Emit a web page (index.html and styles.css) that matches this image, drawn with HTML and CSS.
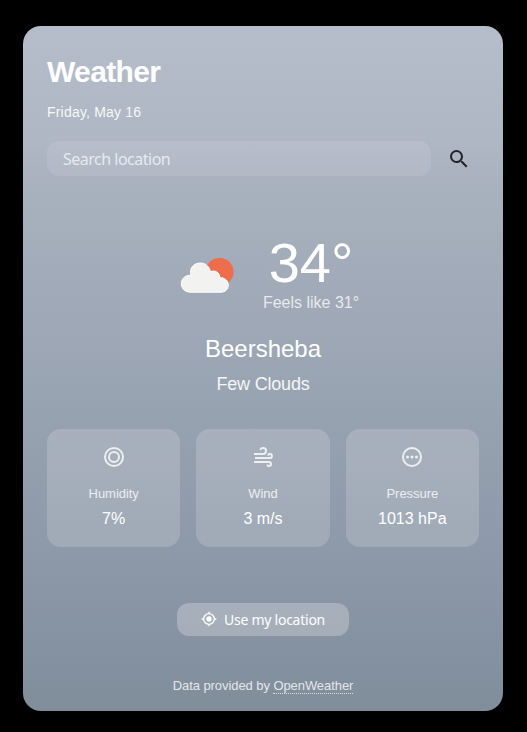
FILE: index.html
```html
<!DOCTYPE html>
<html lang="en">
<head>
<meta charset="utf-8">
<title>Weather</title>
<link rel="stylesheet" href="styles.css">
</head>
<body>
<main class="card">
  <h1 class="title">Weather</h1>
  <p class="date">Friday, May 16</p>
  <form class="search">
    <input class="search-input" type="text" placeholder="Search location" aria-label="Search location">
    <button class="search-button" type="button" aria-label="Search">
      <svg width="24" height="24" viewBox="0 0 24 24" fill="currentColor"><path d="M15.5 14h-.79l-.28-.27A6.471 6.471 0 0 0 16 9.5 6.500 6.500 0 1 0 9.500 16c1.610 0 3.090-.590 4.230-1.570l.270.280v.790l5 4.990L20.490 19l-4.990-5zm-6 0C7.010 14 5 11.990 5 9.500S7.010 5 9.500 5 14 7.010 14 9.500 11.990 14 9.500 14z"/></svg>
    </button>
  </form>
  <section class="current">
    <svg class="cloud" width="54" height="36" viewBox="0 0 54 36">
      <circle cx="39.500" cy="14" r="14" fill="#ec6e4c"/>
      <path d="M9.500 34.200A8.500 8.500 0 1 1 11 17.300C9 9.800 14 5 20.500 5c5 0 9 3.500 10 8.800 4.500-2.200 9.200.7 9.500 6 4.500-.5 8.300 2.700 8.300 7.200 0 4.200-3 7.200-7.300 7.200z" fill="#f2f2f0" stroke="#fff" stroke-width="1"/>
    </svg>
    <div class="reading">
      <div class="temp">34°</div>
      <div class="feels">Feels like 31°</div>
    </div>
  </section>
  <h2 class="city">Beersheba</h2>
  <p class="condition">Few Clouds</p>
  <section class="stats">
    <div class="stat">
      <svg class="stat-icon" width="24" height="24" viewBox="0 0 24 24" fill="none" stroke="currentColor" stroke-width="2"><circle cx="12" cy="12" r="9"/><circle cx="12" cy="12" r="5"/></svg>
      <span class="label">Humidity</span>
      <span class="value">7%</span>
    </div>
    <div class="stat">
      <svg class="stat-icon" width="24" height="24" viewBox="0 0 24 24" fill="none" stroke="currentColor" stroke-width="2"><path d="M3 9h9a3 3 0 1 0-2.800-4M4 13h15a2 2 0 1 0-2-2.400M3 17h15a2 2 0 1 1-1.900 2.600"/></svg>
      <span class="label">Wind</span>
      <span class="value">3 m/s</span>
    </div>
    <div class="stat">
      <svg class="stat-icon" width="24" height="24" viewBox="0 0 24 24" fill="none" stroke="currentColor" stroke-width="2"><circle cx="12" cy="12" r="9"/><g fill="currentColor" stroke="none"><circle cx="7.500" cy="12" r="1.500"/><circle cx="12" cy="12" r="1.500"/><circle cx="16.500" cy="12" r="1.500"/></g></svg>
      <span class="label">Pressure</span>
      <span class="value">1013 hPa</span>
    </div>
  </section>
  <button class="locate" type="button">
    <svg class="locate-icon" width="16" height="16" viewBox="0 0 24 24" fill="none" stroke="currentColor" stroke-width="2"><circle cx="12" cy="12" r="8"/><path d="M12 1v3M12 20v3M1 12h3M20 12h3"/><circle cx="12" cy="12" r="4" fill="currentColor" stroke="none"/></svg>
    <span>Use my location</span>
  </button>
  <p class="credit">Data provided by <a class="credit-link">OpenWeather</a></p>
</main>
</body>
</html>
```
FILE: styles.css
```css
* { box-sizing: border-box; margin: 0; padding: 0; }
body {
  background: #000;
  color: #fff;
  font-family: "Liberation Sans", Arial, sans-serif;
  padding: 26px 24px 21px 23px;
}
.card {
  display: flex;
  flex-direction: column;
  height: 685px;
  padding: 28px 24px 0;
  border-radius: 18px;
  background: linear-gradient(#b6bdca 0%, #afb6c4 17%, #a8b1be 24%, #8e9aa9 75%, #808d9b 100%);
}
.title { font-size: 30px; line-height: 36px; letter-spacing: -.65px; }
.date { margin-top: 14px; font-size: 14px; line-height: 17px; opacity: .9; letter-spacing: .2px; }
.search { display: flex; margin-top: 20px; height: 35px; }
.search-input {
  width: 384px;
  padding: 0 16px;
  border: 0;
  border-radius: 12px;
  background: rgba(255, 255, 255, .1);
  font: 16px "Noto Sans", sans-serif;
  letter-spacing: -.5px;
}
.search-input::placeholder { color: rgba(255, 255, 255, .7); }
.search-button {
  display: grid;
  place-items: center;
  flex: 1;
  padding-left: 7px;
  border: 0;
  background: none;
  color: #212529;
}
.current { display: flex; justify-content: center; gap: 29px; margin: 56px 0 0 13px; height: 80px; }
.cloud { margin-top: 26px; }
.reading { width: 97px; text-align: center; white-space: nowrap; }
.temp { font-size: 56px; line-height: 62px; }
.feels { font-size: 16px; line-height: 18px; opacity: .75; }
.city { margin-top: 23px; text-align: center; font-size: 24px; line-height: 28px; font-weight: 400; }
.condition { margin-top: 10px; text-align: center; font-size: 18px; line-height: 22px; letter-spacing: -.2px; opacity: .9; }
.stats { display: grid; grid-template-columns: repeat(3, 1fr); gap: 16px; margin-top: 34px; }
.stat {
  display: flex;
  flex-direction: column;
  align-items: center;
  height: 118px;
  padding-top: 16px;
  border-radius: 14px;
  background: rgba(255, 255, 255, .17);
}
.stat-icon { opacity: .8; }
.label { margin-top: 17px; font-size: 13px; line-height: 16px; letter-spacing: -.05px; opacity: .8; }
.value { margin-top: 7px; font-size: 16px; line-height: 20px; }
.locate {
  display: flex;
  align-items: center;
  justify-content: center;
  align-self: center;
  gap: 7px;
  width: 172px;
  height: 33px;
  margin-top: 56px;
  border: 0;
  border-radius: 12px;
  background: rgba(255, 255, 255, .25);
  color: #fff;
  font: 14px "Noto Sans", sans-serif;
  letter-spacing: -.25px;
}
.locate-icon { margin-bottom: 2px; }
.credit { margin-top: 42px; text-align: center; font-size: 13px; line-height: 16px; letter-spacing: -.07px; color: rgba(255, 255, 255, .8); }
.credit-link { border-bottom: 1px dotted rgba(255, 255, 255, .7); }
```
